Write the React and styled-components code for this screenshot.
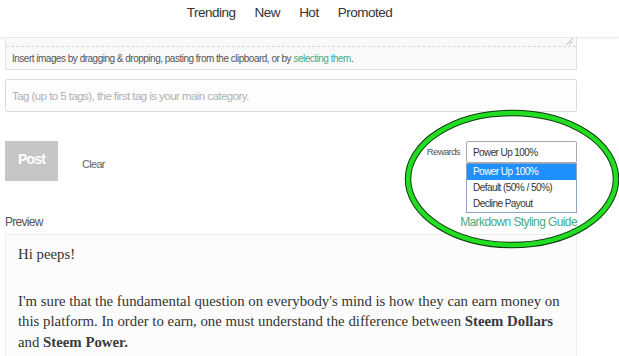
import React from 'react'
import styled, { createGlobalStyle } from 'styled-components'

const GlobalStyle = createGlobalStyle`
  body {
    margin: 0;
    background: #fff;
    overflow: hidden;
    font-family: "Liberation Sans", Arial, sans-serif;
  }
`

const Page = styled.div`
  position: relative;
  width: 619px;
  height: 356px;
  overflow: hidden;
`

const Header = styled.header`
  height: 38px;
  display: flex;
  align-items: center;
  justify-content: center;
  gap: 19px;
  padding: 0 40px 12px 0;
  box-sizing: border-box;
  background: #fff;
  border-bottom: 1px solid #ececec;
  box-shadow: 0 1px 2px rgba(0, 0, 0, 0.05);
`

const NavLink = styled.a`
  font-size: 13.5px;
  letter-spacing: -0.5px;
  color: #333;
  text-decoration: none;
`

const Main = styled.main`
  padding: 0 42px 0 5px;
`

const EditorTail = styled.div`
  height: 31px;
  border: 1px solid #e3e3e3;
  border-top: none;
  background: #f9f9f9;
  display: flex;
  flex-direction: column;
`

const ResizeStrip = styled.div`
  height: 8px;
  border-bottom: 1px dashed #d8d8d8;
  display: flex;
  justify-content: flex-end;
  padding-right: 3px;
`

const Hint = styled.div`
  flex: 1;
  display: flex;
  align-items: center;
  padding-left: 6px;
  font-size: 10px;
  letter-spacing: -0.5px;
  color: #555;
`

const Link = styled.a`
  color: #4aa882;
  text-decoration: none;
`

const TagInput = styled.div`
  margin-top: 9px;
  height: 31px;
  border: 1px solid #dcdcdc;
  border-radius: 2px;
  background: #fdfdfd;
  display: flex;
  align-items: center;
  padding-left: 6px;
  font-size: 11.5px;
  letter-spacing: -0.55px;
  color: #b0b0b0;
`

const Actions = styled.div`
  margin-top: 29px;
  display: flex;
  justify-content: space-between;
  align-items: flex-start;
`

const Left = styled.div`
  display: flex;
  align-items: center;
  gap: 24px;
`

const PostButton = styled.button`
  width: 53px;
  height: 40px;
  border: none;
  background: #c6c6c6;
  color: #fff;
  font-family: inherit;
  font-weight: bold;
  font-size: 14px;
  letter-spacing: -0.8px;
  padding: 0 0 4px;
`

const ClearButton = styled.span`
  font-size: 11px;
  letter-spacing: -0.7px;
  color: #666;
  padding-top: 5px;
`

const Rewards = styled.div`
  display: flex;
  align-items: flex-start;
  gap: 6px;
`

const Label = styled.span`
  font-size: ${p => p.$size || 9.5}px;
  letter-spacing: ${p => p.$spacing || -0.6}px;
  color: #555;
  line-height: 22px;
`

const SelectWrap = styled.div`
  width: 111px;
  display: flex;
  flex-direction: column;
`

const SelectBox = styled.div`
  height: 22px;
  box-sizing: border-box;
  border: 1px solid #a9a9a9;
  border-radius: 2px;
  background: #fff;
  display: flex;
  align-items: center;
  padding-left: 6px;
  font-size: 10px;
  letter-spacing: -0.6px;
  color: #333;
`

const Options = styled.ul`
  margin: 0;
  padding: 0;
  list-style: none;
  border: 1px solid #8ea3c4;
  background: #fff;
`

const Option = styled.li`
  height: 16px;
  line-height: 16px;
  padding-left: 6px;
  font-size: 10px;
  letter-spacing: -0.55px;
  color: ${p => (p.$active ? '#fff' : '#333')};
  background: ${p => (p.$active ? '#1e90ff' : 'transparent')};
`

const PreviewRow = styled.div`
  display: flex;
  justify-content: space-between;
  align-items: center;
  height: 18px;
`

const GuideLink = styled(Link)`
  font-size: 12px;
  letter-spacing: -0.6px;
`

const Preview = styled.div`
  margin-top: 3px;
  border: 1px solid #ececec;
  background: #fcfcfc;
  padding: 9px 12px 20px 12px;
  font-family: "Liberation Serif", "Times New Roman", serif;
  font-size: 14.8px;
  line-height: 20.5px;
  color: #333;

  p {
    margin: 0 0 26px;
  }
  strong {
    font-weight: bold;
    color: #3a3a3a;
  }
`

const Annotation = styled.svg`
  position: absolute;
  left: 400px;
  top: 104px;
  pointer-events: none;
`

const ResizeGrip = () => (
  <svg width="7" height="7" viewBox="0 0 7 7">
    <path d="M6.5 0.5 L0.5 6.5 M6.5 3.5 L3.5 6.5" stroke="#999" strokeWidth="0.8" />
  </svg>
)

const nav = ['Trending', 'New', 'Hot', 'Promoted']
const options = ['Power Up 100%', 'Default (50% / 50%)', 'Decline Payout']

const App = () => {
  return (
    <Page>
      <GlobalStyle />
      <Header>
        {nav.map(n => (
          <NavLink key={n}>{n}</NavLink>
        ))}
      </Header>
      <Main>
        <EditorTail>
          <ResizeStrip>
            <ResizeGrip />
          </ResizeStrip>
          <Hint>
            Insert images by dragging &amp; dropping, pasting from the clipboard, or by&nbsp;
            <Link>selecting them</Link>.
          </Hint>
        </EditorTail>
        <TagInput>Tag (up to 5 tags), the first tag is your main category.</TagInput>
        <Actions>
          <Left>
            <PostButton>Post</PostButton>
            <ClearButton>Clear</ClearButton>
          </Left>
          <Rewards>
            <Label>Rewards</Label>
            <SelectWrap>
              <SelectBox>Power Up 100%</SelectBox>
              <Options>
                {options.map((o, i) => (
                  <Option key={o} $active={i === 0}>{o}</Option>
                ))}
              </Options>
            </SelectWrap>
          </Rewards>
        </Actions>
        <PreviewRow>
          <Label $size={12} $spacing={-0.7}>Preview</Label>
          <GuideLink>Markdown Styling Guide</GuideLink>
        </PreviewRow>
        <Preview>
          <p>Hi peeps!</p>
          <p>
            I'm sure that the fundamental question on everybody's mind is how they can earn money on
            this platform. In order to earn, one must understand the difference between{' '}
            <strong>Steem Dollars</strong> and <strong>Steem Power.</strong>
          </p>
        </Preview>
      </Main>
      <Annotation width="219" height="150" viewBox="0 0 219 150">
        <ellipse cx="112" cy="75" rx="104" ry="66" fill="none" stroke="#0d3a0d" strokeWidth="6.5" />
        <ellipse cx="112" cy="75" rx="104" ry="66" fill="none" stroke="#22dd22" strokeWidth="4.5" />
      </Annotation>
    </Page>
  )
}

export default App
